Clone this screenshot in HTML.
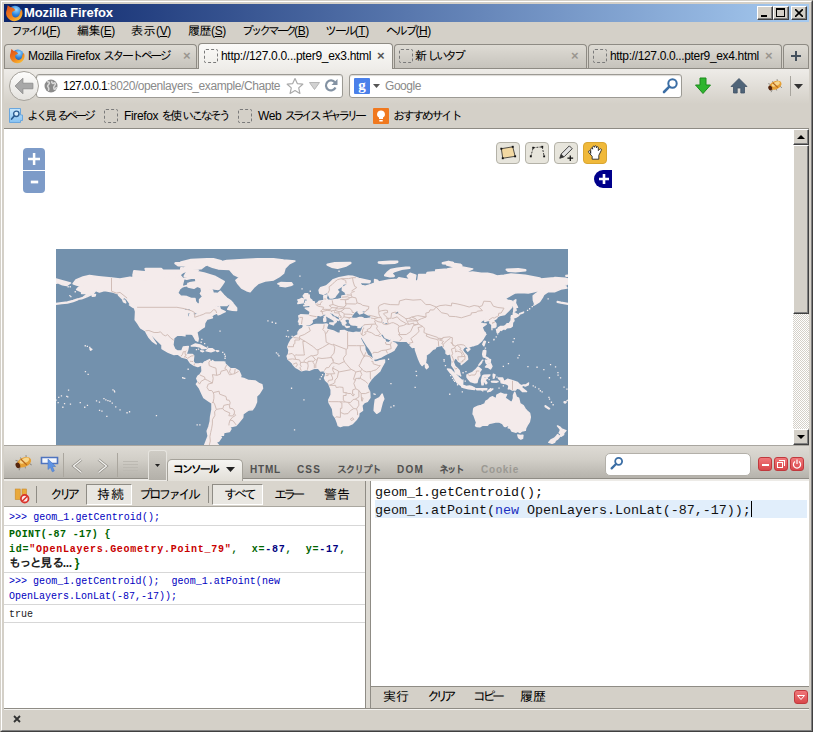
<!DOCTYPE html>
<html lang="ja"><head><meta charset="utf-8"><title>Mozilla Firefox</title>
<style>
*{box-sizing:border-box;margin:0;padding:0}
html,body{width:813px;height:732px;overflow:hidden;background:#d4d0c8}
body{position:relative;font-family:"Liberation Sans","IPAGothic",sans-serif;font-size:12px;color:#000}
.a{position:absolute}
.t{position:absolute;white-space:nowrap;line-height:14px;height:14px}
.u{text-decoration:underline}
.mono{font-family:"Liberation Mono","IPAGothic",monospace}
/* window frame */
#frame{left:0;top:0;width:813px;height:732px;border:1px solid;border-color:#d4d0c8 #404040 #404040 #d4d0c8}
#frame2{left:1px;top:1px;width:811px;height:730px;border:1px solid;border-color:#fff #808080 #808080 #fff}
#title{left:4px;top:4px;width:805px;height:18px;background:linear-gradient(90deg,#0a246a,#a6caf0)}
.wb{top:6px;width:16px;height:14px;background:#d4d0c8;border:1px solid;border-color:#fff #404040 #404040 #fff;box-shadow:inset -1px -1px 0 #808080}
/* tabs */
.tab{top:44px;height:24px;border:1px solid #8e8b84;border-bottom:none;border-radius:4px 4px 0 0;background:linear-gradient(#dedbd4,#c6c3bc)}
.tab.act{background:linear-gradient(#fbfaf8,#eeece8);top:43px;height:27px}
.dash{width:14px;height:14px;border:1px dashed #7a7a7a;border-radius:2px}
.tx{font-size:13px;font-weight:bold;color:#9a9690;font-family:"Liberation Sans",sans-serif}
/* nav */
.box{background:#fff;border:1px solid #9c9a94;border-radius:3px;box-shadow:inset 0 1px 1px #dcdad6}
/* content */
#content{left:4px;top:129px;width:789px;height:316px;background:#fff}
#vscroll{left:793px;top:129px;width:16px;height:316px;background:repeating-conic-gradient(#fff 0 25%,#d4d0c8 0 50%) 0 0/2px 2px}
.sbtn{left:0;width:16px;height:16px;background:#d4d0c8;border:1px solid;border-color:#fff #404040 #404040 #fff;box-shadow:inset -1px -1px 0 #808080}
.zb{left:23px;width:22px;height:22px;background:#7d9bc8;color:#fff}
.ed{top:142px;width:24px;height:22px;border:1px solid #b4b2a8;border-radius:4px;background:#e7e5dc}
.map{position:absolute;left:56px;top:249px}
/* firebug */
#fbtool{left:4px;top:445px;width:805px;height:36px;background:linear-gradient(#dddad4,#d2cfc8 40%,#b4b1aa);border-top:1px solid #a9a6a0;border-bottom:2px solid #edebe7;box-shadow:inset 0 -1px 0 #8f8c85}
.fbtab{position:absolute;top:464px;font-weight:bold;font-size:10px;line-height:12px;color:#505050;white-space:nowrap}
.rb{top:457px;width:14px;height:14px;border-radius:3px;background:linear-gradient(#f0787a,#d9474b);border:1px solid #c0393d}
#ctool{left:4px;top:481px;width:361px;height:26px;background:#d9d5cd;border-bottom:1px solid #aaa79f}
.row{left:4px;width:361px;border-bottom:1px solid #d7d7d7;background:#fff}
.cl{position:absolute;left:9px;white-space:nowrap;font-family:"Liberation Mono","IPAGothic",monospace;font-size:10px;line-height:14px}
.ed16{position:absolute;left:375px;white-space:nowrap;font-family:"Liberation Mono","IPAGothic",monospace;font-size:13.4px;line-height:18px;color:#111}
.k{letter-spacing:var(--k)}.c{letter-spacing:var(--c)}</style></head><body>
<div class="a" id="frame"></div><div class="a" id="frame2"></div>
<!-- title bar -->
<div class="a" id="title"></div>
<svg class="a" style="left:5px;top:4px" width="18" height="18" viewBox="0 0 16 16"><defs><radialGradient id="gl" cx="0.6" cy="0.3" r="0.8"><stop offset="0" stop-color="#9fdcff"/><stop offset="0.5" stop-color="#2f86dc"/><stop offset="1" stop-color="#143f9e"/></radialGradient><linearGradient id="fx" x1="0.2" y1="0" x2="0.8" y2="1"><stop offset="0" stop-color="#e0521a"/><stop offset="0.55" stop-color="#ee7f1c"/><stop offset="1" stop-color="#fbc338"/></linearGradient></defs><circle cx="8.8" cy="7.3" r="5.8" fill="url(#gl)"/><path d="M14.6 4.4 A7.3 7.3 0 1 1 1.6 5 L2.4 1 L4.8 2.9 C6.5 2.8 8.2 4 9.2 5.6 L6.3 7.2 C5.6 9.6 7.2 12 9.6 12 C12 12 13.6 9.6 13.2 7 C14 6.4 14.5 5.4 14.6 4.4Z" fill="url(#fx)"/></svg>
<span class="t" style="letter-spacing:-0.09px;left:24px;top:6px;color:#fff;font-weight:bold;font-size:13px">Mozilla Firefox</span>
<div class="a wb" style="left:757px"><div class="a" style="left:3px;top:8px;width:6px;height:2px;background:#000"></div></div>
<div class="a wb" style="left:773px"><div class="a" style="left:2px;top:1px;width:9px;height:9px;border:1px solid #000;border-top-width:2px"></div></div>
<div class="a wb" style="left:791px"><svg class="a" style="left:3px;top:2px" width="8" height="8"><path d="M0 0L8 8M8 0L0 8" stroke="#000" stroke-width="1.6"/></svg></div>
<!-- menu -->
<span class="t" style="letter-spacing:-0.35px;--k:-3.32px;left:11px;top:24px"><span class="k">ファイル</span>(<span class="u">F</span>)</span>
<span class="t" style="letter-spacing:-0.35px;--c:-0.48px;left:77px;top:24px"><span class="c">編集</span>(<span class="u">E</span>)</span>
<span class="t" style="letter-spacing:-0.35px;--c:0.52px;left:131px;top:24px"><span class="c">表示</span>(<span class="u">V</span>)</span>
<span class="t" style="letter-spacing:-0.35px;--c:-0.48px;left:188px;top:24px"><span class="c">履歴</span>(<span class="u">S</span>)</span>
<span class="t" style="letter-spacing:-0.35px;--k:-3.33px;left:242px;top:24px"><span class="k">ブックマーク</span>(<span class="u">B</span>)</span>
<span class="t" style="letter-spacing:-0.35px;--k:-2.10px;left:325px;top:24px"><span class="k">ツール</span>(<span class="u">T</span>)</span>
<span class="t" style="letter-spacing:-0.35px;--k:-2.21px;left:386px;top:24px"><span class="k">ヘルプ</span>(<span class="u">H</span>)</span>
<!-- tabs -->
<div class="a" style="left:4px;top:68px;width:805px;height:1px;background:#8e8b84"></div>
<div class="a tab" style="left:4px;width:193px"></div>
<div class="a tab act" style="left:198px;width:195px"></div>
<div class="a tab" style="left:394px;width:193px"></div>
<div class="a tab" style="left:588px;width:194px"></div>
<div class="a tab" style="left:783px;width:26px"></div>
<svg class="a" style="left:9px;top:48px" width="16" height="16" viewBox="0 0 16 16"><circle cx="8.8" cy="7.3" r="5.8" fill="url(#gl)"/><path d="M14.6 4.4 A7.3 7.3 0 1 1 1.6 5 L2.4 1 L4.8 2.9 C6.5 2.8 8.2 4 9.2 5.6 L6.3 7.2 C5.6 9.6 7.2 12 9.6 12 C12 12 13.6 9.6 13.2 7 C14 6.4 14.5 5.4 14.6 4.4Z" fill="url(#fx)"/></svg>
<span class="t" style="letter-spacing:-0.35px;--k:-2.55px;left:28px;top:49px">Mozilla Firefox <span class="k">スタートページ</span></span>
<span class="t tx" style="left:183px;top:49px">×</span>
<div class="a dash" style="left:204px;top:49px"></div>
<span class="t" style="letter-spacing:-0.30px;left:221px;top:49px">http://127.0.0...pter9_ex3.html</span>
<span class="t tx" style="left:377px;top:49px;color:#555">×</span>
<div class="a dash" style="left:399px;top:49px"></div>
<span class="t" style="letter-spacing:0.00px;--k:-3.03px;--c:0.00px;left:415px;top:49px"><span class="c">新</span><span class="k">しいタブ</span></span>
<span class="t tx" style="left:571px;top:49px">×</span>
<div class="a dash" style="left:593px;top:49px"></div>
<span class="t" style="letter-spacing:-0.34px;left:610px;top:49px">http://127.0.0...pter9_ex4.html</span>
<span class="t tx" style="left:765px;top:49px">×</span>
<svg class="a" style="left:790px;top:50px" width="12" height="12"><path d="M6 1V11M1 6H11" stroke="#44505c" stroke-width="2"/></svg>
<!-- nav bar -->
<div class="a" style="left:4px;top:69px;width:805px;height:35px;background:linear-gradient(#eeece8,#d4d0c8)"></div>
<div class="a box" style="left:36px;top:74px;width:307px;height:24px"></div>
<div class="a" style="left:9px;top:71px;width:30px;height:30px;border-radius:15px;background:linear-gradient(#fdfdfc,#e4e2de);border:1px solid #a6a39c"></div>
<svg class="a" style="left:14px;top:77px" width="20" height="18" viewBox="0 0 18 16"><path d="M8 1L1 8L8 15V10.5H17V5.5H8Z" fill="#a8a8a8" stroke="#8e8e8e" stroke-width="0.8" stroke-linejoin="round"/></svg>
<svg class="a" style="left:44px;top:79px" width="14" height="14" viewBox="0 0 14 14"><circle cx="7" cy="7" r="6.5" fill="#8b8b8b"/><path d="M3 3C5 2 6 4 5 5C4 6 3 7 4 8C5 9 5 11 4 11.5M8 2C7 4 9 5 10 4C11 3.5 12 5 11 6C10 7 9 8 10 10C11 11 12 9 12.5 8" fill="none" stroke="#d8d8d8" stroke-width="1.6"/></svg>
<span class="t" style="letter-spacing:-0.67px;left:63px;top:79px">127.0.0.1</span>
<span class="t" style="letter-spacing:-0.42px;left:107px;top:79px;color:#8a8a8a">:8020/openlayers_example/Chapte</span>
<svg class="a" style="left:286px;top:77px" width="18" height="18" viewBox="0 0 18 18"><path d="M9 1.5L11.3 6.6L16.8 7.2L12.7 10.9L13.9 16.4L9 13.6L4.1 16.4L5.3 10.9L1.2 7.2L6.7 6.6Z" fill="#fff" stroke="#aaa" stroke-width="1.2" stroke-linejoin="round"/></svg>
<svg class="a" style="left:309px;top:82px" width="11" height="8"><path d="M0.5 0.5H10.5L5.5 7.5Z" fill="#d2d2d2" stroke="#b6b6b6"/></svg>
<svg class="a" style="left:324px;top:78px" width="15" height="15" viewBox="0 0 15 15"><path d="M11.5 9.5A5 5 0 1 1 11 4.5" fill="none" stroke="#8392a3" stroke-width="2.2"/><path d="M13.5 1V7H7.5Z" fill="#8392a3"/></svg>
<div class="a box" style="left:349px;top:74px;width:333px;height:24px"></div>
<div class="a" style="left:354px;top:78px;width:16px;height:16px;background:#4a80ea;border-radius:1px;color:#fff;font:bold 15px/15px 'Liberation Serif',serif;text-align:center">g</div>
<svg class="a" style="left:373px;top:84px" width="7" height="4"><path d="M0 0H7L3.5 4Z" fill="#555"/></svg>
<span class="t" style="letter-spacing:-0.45px;left:385px;top:79px;color:#8a8a8a">Google</span>
<svg class="a" style="left:662px;top:77px" width="17" height="17" viewBox="0 0 17 17"><circle cx="10.5" cy="6.5" r="4.2" fill="#fff" stroke="#3b6ea5" stroke-width="2"/><path d="M7.3 9.7L2 15" stroke="#3b6ea5" stroke-width="2.6" stroke-linecap="round"/></svg>
<svg class="a" style="left:694px;top:77px" width="18" height="18" viewBox="0 0 18 18"><path d="M6 1H12V8H16.5L9 16.5L1.5 8H6Z" fill="#2fb52f" stroke="#1d8a1d" stroke-width="1" stroke-linejoin="round"/></svg>
<svg class="a" style="left:730px;top:77px" width="18" height="18" viewBox="0 0 18 18"><path d="M9 1.5L17 9.5H14.5V16H10.8V11H7.2V16H3.5V9.5H1Z" fill="#4f6478" stroke="#3f5164" stroke-width="0.8" stroke-linejoin="round"/></svg>
<svg class="a" style="left:766px;top:77px" width="18" height="17" viewBox="0 0 20 18"><g transform="rotate(-24 10 9)"><path d="M4 4L7 7M3 14L6.5 11M9 3.5L10 6M15 3.5L14 6.5M16 14.5L14.5 11.5M9.5 14.8L10 12" stroke="#8a8680" stroke-width="0.9" fill="none"/><ellipse cx="10.5" cy="9" rx="7.2" ry="4.5" fill="#e6a035"/><ellipse cx="11.5" cy="7.8" rx="4.8" ry="2.2" fill="#f7d68c"/><path d="M9 5.2L12 12.6" stroke="#b5651d" stroke-width="1.2"/><ellipse cx="4" cy="9.3" rx="2.1" ry="2.8" fill="#55260e"/></g></svg>
<div class="a" style="left:790px;top:76px;width:1px;height:20px;background:#a8a59e"></div>
<svg class="a" style="left:794px;top:84px" width="9" height="5"><path d="M0 0H9L4.5 5Z" fill="#333"/></svg>
<!-- bookmarks -->
<svg class="a" style="left:8px;top:107px" width="16" height="17" viewBox="0 0 16 17"><defs><linearGradient id="bk" x1="0" y1="0" x2="0" y2="1"><stop offset="0" stop-color="#c6e6fc"/><stop offset="1" stop-color="#86c1f1"/></linearGradient></defs><path d="M1.5 1.5H12.5V8H14.5V13.5H12.5V15.5H1.5Z" fill="url(#bk)" stroke="#6aa6dd" stroke-width="1"/><circle cx="8.3" cy="6.8" r="2.7" fill="#d9eefc" stroke="#2c5d92" stroke-width="1.4"/><path d="M6.3 8.9L3.6 12" stroke="#2c5d92" stroke-width="1.7" stroke-linecap="round"/></svg>
<span class="t" style="letter-spacing:0.00px;--k:-3.02px;--c:0.00px;left:27px;top:109px"><span class="k">よく</span><span class="c">見</span><span class="k">るページ</span></span>
<div class="a dash" style="left:104px;top:109px"></div>
<span class="t" style="letter-spacing:-0.35px;--k:-2.87px;--c:0.00px;left:124px;top:109px">Firefox <span class="k">を</span><span class="c">使</span><span class="k">いこなそう</span></span>
<div class="a dash" style="left:238px;top:109px"></div>
<span class="t" style="letter-spacing:-0.35px;--k:-3.54px;left:258px;top:109px">Web <span class="k">スライス</span> <span class="k">ギャラリー</span></span>
<svg class="a" style="left:373px;top:108px" width="16" height="16" viewBox="0 0 16 16"><rect width="16" height="16" rx="1" fill="#f0781e"/><path d="M8 2.5A3.8 3.8 0 0 1 10 9.6V11H6V9.6A3.8 3.8 0 0 1 8 2.5ZM6.3 12H9.7V13.5H6.3Z" fill="#fff"/></svg>
<span class="t" style="letter-spacing:0.00px;--k:-2.38px;left:393px;top:109px"><span class="k">おすすめサイト</span></span>
<!-- content -->
<div class="a" style="left:4px;top:128px;width:805px;height:1px;background:#8e8b84"></div>
<div class="a" id="content"></div>
<div class="a" id="vscroll">
 <div class="a sbtn" style="top:0px"><svg class="a" style="left:3px;top:5px" width="8" height="4"><path d="M0 4H8L4 0Z" fill="#000"/></svg></div>
 <div class="a sbtn" style="top:16px;height:169px"></div>
 <div class="a sbtn" style="top:300px"><svg class="a" style="left:3px;top:5px" width="8" height="4"><path d="M0 0H8L4 4Z" fill="#000"/></svg></div>
</div>
<div class="a zb" style="top:148px;border-radius:4px 4px 0 0"><svg class="a" style="left:5px;top:5px" width="12" height="12"><path d="M6.1 0V12M0 6H12.2" stroke="#fff" stroke-width="2.5"/></svg></div>
<div class="a zb" style="top:171px;border-radius:0 0 4px 4px"><svg class="a" style="left:7px;top:9px" width="9" height="4"><path d="M0.8 2H8.2" stroke="#fff" stroke-width="2.8"/></svg></div>
<div class="a ed" style="left:496px"><svg style="display:block" width="22" height="20" viewBox="0 0 23 21"><path d="M4.5 6L16.5 4L19 14L6 16Z" fill="#f3d9a2" stroke="#222" stroke-width="0.8"/><g fill="#111"><rect x="3.5" y="5" width="2" height="2"/><rect x="15.5" y="3" width="2" height="2"/><rect x="18" y="13" width="2" height="2"/><rect x="5" y="15" width="2" height="2"/></g></svg></div>
<div class="a ed" style="left:525px"><svg style="display:block" width="22" height="20" viewBox="0 0 23 21"><path d="M5 14L7.5 5L17 4L19 14" fill="none" stroke="#222" stroke-width="0.9" stroke-dasharray="2 1.2"/><g fill="#111"><rect x="4" y="13" width="2" height="2"/><rect x="6.5" y="4" width="2" height="2"/><rect x="16" y="3" width="2" height="2"/><rect x="18" y="13" width="2" height="2"/></g></svg></div>
<div class="a ed" style="left:554px"><svg style="display:block" width="22" height="20" viewBox="0 0 23 21"><path d="M5 16L6.5 11.5L15 3L18 6L9.5 14.5Z" fill="#e4e4e4" stroke="#222" stroke-width="0.9" stroke-linejoin="round"/><path d="M5 16L6.5 11.5L9.5 14.5Z" fill="#333"/><path d="M16 13V19M13 16H19" stroke="#111" stroke-width="1.3"/></svg></div>
<div class="a ed" style="left:583px;background:#f0b93a;border-color:#d9a632"><svg style="display:block" width="22" height="20" viewBox="0 0 23 21"><path d="M7 11V6.5C7 5 9 5 9 6.5V4.5C9 3 11 3 11 4.5V4C11 2.5 13 2.5 13 4V5C13 3.5 15 3.5 15 5V8L16.5 6.5C17.5 5.5 19 6.5 18 8L15.5 13V17H8.5V14L5 10C4 8.5 5.5 7.5 6.5 8.5Z" fill="#fff" stroke="#222" stroke-width="0.9" stroke-linejoin="round"/></svg></div>
<div class="a" style="left:594px;top:170px;width:18px;height:18px;background:#00008b;border-radius:9px 0 0 9px"><svg class="a" style="left:5px;top:4px" width="10" height="10"><path d="M5 0V10M0 5H10" stroke="#fff" stroke-width="2.6"/></svg></div>
<svg class="map" width="512" height="196" viewBox="0 0 512 196"><rect width="512" height="256" fill="#7391ad"/><g filter="url(#mb)"><path d="M17.1 34.7 L19.9 30.9 L27.0 28.0 L33.4 26.6 L42.7 27.7 L55.5 29.0 L64.0 29.9 L74.0 28.2 L79.6 29.2 L85.3 29.3 L92.4 31.3 L102.4 31.3 L112.4 31.3 L119.5 31.3 L120.9 26.3 L123.7 25.7 L126.6 29.2 L130.8 30.2 L135.1 29.2 L139.4 28.9 L140.1 32.7 L133.7 33.7 L131.6 36.3 L126.6 37.7 L123.7 39.8 L121.6 44.1 L124.4 46.9 L130.8 47.6 L135.1 49.4 L139.0 49.6 L139.4 52.6 L141.5 55.0 L143.6 54.8 L143.6 50.5 L146.8 47.6 L144.4 44.5 L145.8 42.0 L145.1 39.3 L151.5 39.4 L156.4 41.2 L157.2 44.1 L162.1 44.4 L164.3 42.2 L167.8 46.2 L170.7 49.1 L174.9 51.9 L176.8 54.0 L172.8 55.0 L170.7 56.6 L161.4 56.6 L157.9 59.0 L163.6 58.0 L164.3 60.4 L169.2 62.6 L165.0 64.7 L162.1 65.8 L161.4 64.0 L157.9 65.4 L155.7 66.8 L156.4 68.7 L150.8 70.3 L148.6 74.0 L148.3 77.9 L145.1 79.8 L140.8 83.2 L142.2 89.6 L141.8 92.2 L139.7 91.0 L138.2 88.2 L136.5 85.3 L132.3 84.8 L128.7 85.0 L129.0 86.8 L125.9 86.2 L121.6 86.0 L117.8 88.9 L117.3 92.4 L116.9 96.0 L118.8 100.3 L121.6 102.1 L125.9 101.7 L127.3 98.1 L132.3 97.4 L131.6 101.0 L130.1 105.2 L136.5 105.5 L137.7 106.7 L137.0 112.4 L138.7 114.8 L142.2 114.9 L145.1 114.5 L146.5 115.9 L144.8 116.3 L141.8 117.6 L138.2 116.3 L134.4 113.8 L131.6 109.5 L125.9 108.1 L121.6 105.0 L118.0 105.5 L112.4 103.4 L106.0 99.6 L106.0 96.0 L101.0 91.3 L96.0 86.0 L92.9 82.9 L96.0 88.5 L98.1 91.7 L100.3 95.0 L96.7 92.4 L93.2 88.5 L91.3 85.3 L89.5 81.8 L84.6 78.9 L81.8 74.4 L79.2 70.7 L79.6 62.6 L78.6 59.2 L81.8 59.7 L81.1 57.9 L74.7 55.5 L71.1 50.5 L66.8 46.9 L61.9 44.8 L56.9 43.0 L48.4 41.5 L43.4 43.0 L39.8 41.5 L37.0 44.8 L31.3 47.6 L25.6 49.8 L21.6 50.3 L27.0 48.4 L32.0 44.5 L25.6 44.5 L25.6 42.7 L20.6 40.5 L22.8 38.1 L27.0 36.7 L21.3 36.3Z M152.2 16.6 L159.3 14.2 L170.7 11.4 L192.0 10.2 L213.3 9.2 L227.6 11.0 L238.9 12.1 L233.2 14.9 L229.0 19.2 L227.6 24.2 L223.3 27.7 L217.6 30.9 L209.1 32.0 L202.0 34.6 L197.7 38.4 L194.1 42.7 L190.6 41.7 L185.6 39.1 L182.0 34.8 L179.9 31.3 L183.5 28.4 L177.8 25.6 L173.5 20.6 L162.1 19.9 L156.4 18.2Z M171.7 60.2 L174.9 55.0 L177.1 54.8 L180.6 59.0 L180.6 61.6 L176.4 61.3Z M73.5 55.9 L78.2 56.9 L80.5 59.2 L77.5 58.6Z M135.3 96.9 L139.4 95.0 L145.1 96.3 L150.5 99.3 L145.8 99.7 L144.4 98.1 L139.4 97.0Z M150.2 101.8 L152.5 99.7 L156.4 99.8 L158.7 101.5 L155.0 102.7Z M144.6 101.8 L147.6 102.3 L146.2 102.7Z M160.4 101.8 L162.7 102.0 L161.4 102.5Z M146.1 115.8 L148.6 112.9 L150.0 112.4 L153.6 110.6 L154.3 112.4 L154.3 114.5 L156.4 111.6 L158.6 113.1 L165.0 113.1 L167.8 112.9 L170.0 115.9 L174.2 119.5 L179.2 119.8 L182.8 121.9 L184.9 126.6 L184.2 128.7 L187.7 129.4 L192.7 131.6 L199.1 132.0 L203.4 134.8 L205.9 135.8 L206.5 139.4 L203.4 144.4 L200.5 147.2 L200.5 152.9 L198.4 157.9 L196.3 160.7 L192.7 161.0 L187.0 165.0 L186.7 168.5 L182.0 174.2 L179.9 176.6 L175.6 177.5 L172.9 176.4 L174.9 179.9 L173.5 182.5 L167.8 183.5 L167.4 186.3 L163.6 186.3 L165.4 188.4 L162.8 192.0 L160.0 193.4 L162.4 196.0 L157.9 199.8 L158.7 202.5 L163.3 205.9 L158.6 206.9 L153.6 204.8 L150.0 202.0 L148.6 196.3 L150.8 190.6 L152.2 187.0 L151.2 182.0 L152.9 177.8 L154.3 172.1 L154.6 167.8 L156.0 160.7 L156.0 154.2 L152.9 152.2 L147.9 148.6 L146.2 145.1 L143.6 139.4 L140.4 135.1 L142.2 132.7 L140.8 129.4 L142.2 126.9 L143.9 125.9 L146.1 122.3 L145.8 118.0Z M242.8 66.8 L244.6 65.8 L253.4 66.3 L254.3 62.6 L249.3 59.2 L253.9 58.7 L254.2 57.3 L256.3 57.3 L258.3 55.6 L261.7 54.0 L263.1 52.2 L268.1 51.6 L267.8 46.9 L271.1 45.9 L270.2 49.1 L271.6 51.2 L275.9 51.2 L282.3 50.2 L285.9 49.5 L285.9 46.9 L290.6 46.2 L289.4 43.8 L295.8 43.2 L298.7 42.7 L288.7 42.8 L286.3 41.2 L286.6 38.4 L291.6 35.6 L290.1 34.4 L287.3 35.1 L285.9 37.0 L280.6 40.5 L282.7 42.7 L279.5 46.9 L278.8 48.1 L276.3 49.1 L274.2 49.1 L271.9 44.2 L270.9 43.4 L267.4 45.4 L263.8 44.4 L263.1 41.2 L264.5 38.8 L270.2 37.0 L274.5 33.4 L277.3 30.6 L283.0 28.7 L292.3 26.9 L296.5 27.3 L300.1 28.4 L302.9 29.4 L314.3 32.0 L313.6 33.7 L305.8 33.4 L302.9 33.0 L305.8 36.6 L309.3 37.3 L312.9 36.1 L318.6 34.1 L318.6 30.6 L321.4 31.3 L322.8 32.9 L332.8 30.9 L341.3 30.2 L342.8 28.7 L351.3 30.2 L354.1 30.9 L351.3 27.0 L354.1 24.2 L359.8 26.3 L359.1 30.6 L360.5 33.1 L362.0 30.6 L362.7 25.6 L370.5 25.6 L371.2 23.5 L379.7 22.8 L379.7 20.9 L391.1 19.9 L403.9 17.5 L416.7 19.9 L408.2 23.9 L416.7 23.0 L425.2 24.2 L431.6 24.2 L436.6 25.2 L440.9 27.0 L448.0 26.2 L455.1 24.9 L469.3 26.3 L483.6 28.9 L485.0 29.9 L497.8 28.7 L499.2 28.4 L509.2 29.3 L512.0 29.9 L512.0 34.4 L510.6 35.8 L508.4 36.0 L511.0 39.1 L504.9 40.1 L498.5 42.7 L492.1 42.7 L487.8 45.5 L486.4 48.4 L483.6 52.6 L478.9 55.5 L477.4 51.2 L477.2 46.9 L480.7 44.1 L487.8 39.8 L483.6 41.2 L477.9 42.7 L472.2 44.1 L465.1 43.5 L458.7 44.1 L455.1 46.2 L448.7 49.8 L451.6 51.2 L455.8 51.9 L457.1 54.0 L455.7 58.3 L453.0 61.2 L448.7 65.4 L443.7 66.6 L441.7 67.6 L440.2 69.7 L437.3 71.4 L439.9 74.7 L439.9 77.5 L435.9 79.1 L435.9 75.7 L433.8 74.0 L434.2 71.7 L432.4 71.4 L428.8 72.5 L429.2 69.8 L425.2 72.2 L423.8 74.0 L427.4 74.7 L430.2 75.1 L426.0 78.2 L427.8 82.5 L429.2 83.9 L429.5 85.6 L427.4 89.2 L425.2 92.2 L421.7 95.3 L418.1 96.3 L413.2 97.7 L412.4 99.1 L410.3 97.1 L407.6 98.8 L406.3 101.0 L408.2 103.8 L411.0 106.7 L411.6 110.2 L408.2 113.1 L405.3 115.5 L405.3 113.8 L402.5 112.4 L401.1 110.2 L399.4 108.8 L398.2 110.2 L397.2 113.1 L398.9 117.3 L401.1 119.2 L403.2 121.6 L404.2 125.9 L402.9 125.9 L399.6 123.7 L398.6 120.2 L395.8 116.3 L396.1 112.4 L395.0 106.7 L394.7 104.5 L391.5 105.5 L390.1 104.5 L390.1 101.4 L387.3 98.1 L386.6 96.0 L384.0 96.7 L381.9 97.1 L379.7 98.1 L379.0 99.6 L376.9 100.3 L373.0 104.2 L370.1 106.0 L370.1 109.5 L369.5 113.4 L368.4 114.8 L367.2 115.3 L366.2 116.5 L364.5 114.2 L362.7 110.2 L361.2 106.0 L359.5 101.0 L359.3 97.4 L358.7 98.1 L356.3 98.4 L354.1 96.3 L356.0 95.3 L352.7 94.3 L351.3 92.7 L350.6 91.9 L344.2 92.2 L337.8 91.6 L336.4 89.6 L333.5 90.2 L329.2 88.5 L327.1 85.0 L325.4 85.0 L324.3 86.0 L327.1 90.0 L329.0 90.9 L329.4 93.0 L332.8 93.7 L335.9 90.7 L336.5 93.2 L339.5 94.4 L341.0 96.0 L339.2 99.0 L338.1 101.0 L334.5 103.1 L330.2 105.2 L325.7 107.7 L320.0 109.8 L317.9 109.9 L316.9 106.7 L316.4 104.5 L313.9 100.3 L311.6 97.4 L308.9 93.2 L305.8 88.2 L305.6 86.0 L304.6 88.5 L302.4 85.3 L301.9 83.6 L304.8 83.5 L305.8 81.4 L307.2 77.5 L307.2 75.7 L304.4 76.4 L302.2 76.7 L299.4 76.1 L297.2 75.9 L295.0 75.4 L293.4 73.2 L294.0 71.8 L293.3 70.8 L293.0 70.1 L290.1 69.8 L289.4 70.8 L288.4 70.5 L288.4 72.1 L290.1 74.0 L288.7 74.7 L289.0 76.1 L287.9 76.1 L286.9 75.7 L286.2 74.2 L285.9 72.5 L284.2 71.4 L283.6 69.3 L283.7 68.3 L282.3 67.6 L278.8 66.1 L277.3 64.7 L276.2 63.7 L275.3 64.0 L275.5 63.0 L273.5 63.6 L273.6 65.1 L275.3 66.1 L276.2 67.7 L278.9 68.4 L278.8 69.1 L282.3 70.8 L282.2 71.4 L280.2 70.4 L279.6 71.5 L280.3 72.5 L279.5 73.5 L278.3 74.1 L278.5 72.7 L277.8 71.1 L276.5 70.3 L273.5 68.7 L270.9 67.0 L270.2 65.4 L268.5 64.9 L266.7 65.7 L264.5 66.7 L261.7 66.1 L260.3 67.6 L260.6 68.6 L257.1 70.1 L255.6 71.8 L256.3 73.0 L255.0 74.5 L253.2 75.7 L249.7 75.8 L248.0 76.8 L247.0 75.9 L245.5 75.1 L243.3 75.4 L243.5 73.2 L242.5 72.8 L243.5 69.7Z M0.0 30.0 L7.1 32.0 L14.5 34.0 L10.7 36.6 L6.4 35.8 L2.1 33.8 L0.0 34.4Z M247.6 77.1 L253.2 77.9 L257.4 76.1 L260.3 75.5 L267.4 75.4 L270.2 75.0 L271.6 75.4 L270.9 77.5 L270.2 79.4 L271.6 80.6 L277.3 81.9 L281.6 84.2 L284.4 83.9 L284.4 81.8 L288.7 81.6 L291.6 82.9 L297.2 83.9 L300.1 83.2 L301.9 83.6 L302.4 85.3 L303.6 88.2 L306.5 93.9 L308.6 97.4 L309.0 101.0 L311.5 106.0 L314.3 108.1 L317.6 110.5 L317.2 111.6 L319.3 113.2 L322.8 112.1 L328.5 110.9 L328.5 113.2 L325.7 118.0 L323.6 122.3 L318.6 126.6 L315.0 130.6 L312.2 134.7 L311.2 137.2 L312.2 140.1 L313.6 142.9 L313.9 148.6 L311.5 152.2 L308.3 153.6 L305.8 156.4 L306.5 161.4 L302.9 164.0 L302.6 167.1 L300.1 170.7 L296.5 174.6 L292.6 176.4 L287.3 176.6 L284.4 177.5 L282.2 176.6 L281.6 174.2 L279.5 168.7 L277.3 165.7 L276.6 160.0 L273.1 153.6 L272.8 150.8 L275.2 145.8 L275.2 140.8 L273.5 136.5 L272.8 134.4 L269.5 131.3 L268.5 129.0 L269.5 126.6 L269.9 123.0 L268.5 121.6 L266.0 121.7 L264.5 121.9 L262.4 119.2 L259.6 119.0 L257.4 119.6 L253.2 121.3 L250.3 120.6 L245.3 121.7 L242.5 119.9 L239.6 118.3 L237.1 115.5 L236.5 114.1 L234.7 112.4 L232.2 110.4 L231.1 107.1 L232.5 105.2 L233.0 101.0 L231.8 98.1 L233.2 94.3 L235.0 91.0 L237.5 88.5 L239.9 87.0 L242.1 85.8 L242.1 83.2 L243.9 80.6 L246.3 79.5Z M326.1 145.1 L327.8 150.0 L326.4 152.9 L324.0 162.1 L320.7 164.3 L318.2 161.4 L318.6 156.4 L319.3 151.0 L323.6 148.6Z M247.9 56.7 L251.0 56.5 L258.0 55.2 L258.4 53.0 L256.4 52.6 L255.7 51.2 L253.9 49.8 L253.2 48.4 L253.2 46.1 L251.0 45.9 L251.7 44.7 L248.9 44.7 L247.2 46.9 L248.2 48.4 L249.2 49.8 L251.4 50.1 L251.7 52.1 L249.6 52.3 L250.0 53.6 L248.6 54.3 L251.3 54.9 L249.9 55.3Z M241.8 54.5 L247.0 53.8 L247.5 51.9 L247.8 50.1 L245.6 49.4 L243.9 50.6 L241.8 50.9 L242.8 52.3Z M221.9 34.8 L224.7 33.6 L230.4 33.8 L235.4 33.8 L236.7 35.6 L234.7 36.6 L229.3 37.8 L224.0 37.1 L224.7 35.8Z M509.9 26.5 L512.0 26.3 L512.0 27.2 L510.0 27.2Z M457.7 62.6 L460.1 61.4 L459.4 57.9 L461.5 58.3 L459.4 54.0 L459.8 50.8 L458.0 51.9 L457.5 55.5 L458.0 59.7Z M455.1 69.0 L457.2 69.1 L459.7 68.3 L462.9 66.4 L461.2 65.4 L457.5 63.4 L457.2 66.4 L455.5 66.8Z M442.2 79.6 L444.4 79.2 L448.0 78.8 L449.0 80.4 L450.8 78.8 L453.3 78.6 L454.8 78.2 L456.2 77.2 L456.5 73.5 L458.0 71.8 L457.1 69.1 L455.4 69.7 L455.0 71.8 L453.0 74.8 L451.1 74.8 L449.4 76.8 L448.0 77.2 L444.7 77.5 L442.3 78.9Z M440.5 80.6 L442.3 79.8 L443.7 81.1 L442.7 83.3 L441.2 83.6 L440.9 81.8Z M444.3 80.6 L446.9 79.2 L447.6 79.9 L445.2 81.4Z M428.1 92.2 L429.4 92.4 L427.9 96.7 L426.8 95.3Z M410.6 100.6 L413.2 99.6 L413.9 100.1 L411.7 102.1Z M369.5 114.3 L371.5 115.9 L372.3 118.0 L370.5 119.6 L369.5 118.0Z M427.4 101.7 L429.8 101.8 L429.5 105.2 L428.8 107.4 L432.4 109.5 L432.1 110.1 L429.1 108.4 L427.4 107.7 L426.7 105.2Z M429.5 118.0 L431.6 115.8 L434.5 114.2 L435.9 117.3 L434.5 119.9 L432.4 118.3Z M429.5 111.2 L431.2 111.6 L433.1 110.2 L434.5 110.6 L434.1 113.5 L432.4 113.1 L431.4 114.8 L430.2 114.1Z M422.8 116.2 L426.0 111.9 L425.5 113.5 L423.5 115.9Z M411.0 125.9 L414.3 124.4 L416.7 123.4 L419.6 120.9 L422.1 118.0 L425.2 120.6 L423.4 123.0 L423.8 126.6 L423.1 127.3 L421.7 130.1 L421.0 133.4 L418.8 133.7 L414.6 132.6 L412.4 130.1 L411.0 128.0Z M391.5 120.0 L394.7 120.6 L398.9 124.9 L403.2 129.0 L406.8 132.3 L406.5 136.2 L404.6 136.2 L401.1 133.7 L398.6 129.4 L396.4 125.6 L394.0 123.4Z M405.6 137.7 L407.5 136.5 L410.3 137.5 L413.6 137.1 L416.3 137.8 L418.8 139.1 L418.6 140.4 L412.4 139.7 L407.5 138.5Z M420.3 139.7 L425.2 139.8 L430.9 139.8 L430.6 140.7 L425.2 140.5 L421.0 140.7Z M431.6 142.6 L433.8 140.4 L436.9 139.9 L434.5 141.9Z M426.0 135.8 L427.2 135.8 L427.1 132.3 L428.1 131.8 L429.9 134.8 L430.9 134.0 L428.8 130.6 L431.4 129.4 L430.9 128.9 L428.1 129.4 L426.7 127.6 L428.1 127.3 L432.4 127.4 L433.8 125.9 L428.1 126.3 L426.7 126.9 L426.4 128.0 L425.5 132.0Z M437.3 125.2 L439.0 125.9 L438.0 129.1 L437.2 127.3Z M438.0 132.3 L442.0 132.6 L440.2 133.3 L435.9 133.0 L435.5 132.4Z M442.3 129.1 L446.6 129.1 L448.0 132.7 L451.6 130.3 L456.5 131.7 L461.5 133.4 L463.6 135.8 L466.2 137.0 L465.1 138.0 L466.5 139.4 L470.5 142.6 L466.5 142.5 L463.6 139.7 L460.8 139.0 L459.4 141.1 L456.5 141.1 L453.7 139.5 L452.3 139.9 L453.0 137.7 L452.0 135.5 L448.7 134.4 L445.2 133.7 L444.9 132.0 L446.6 131.3 L443.7 130.8Z M466.9 136.0 L470.0 135.8 L472.5 134.0 L472.2 135.8 L469.3 137.0Z M417.7 160.0 L418.4 159.0 L422.1 157.3 L425.2 156.4 L428.8 155.0 L429.9 152.2 L431.9 151.2 L434.5 148.6 L436.6 147.8 L438.8 149.2 L440.5 149.2 L440.9 146.1 L442.3 145.4 L444.7 144.2 L448.0 145.4 L450.6 145.4 L449.0 149.0 L451.6 150.8 L454.4 152.9 L456.2 152.9 L457.5 149.3 L457.5 146.2 L458.7 143.2 L460.4 148.3 L462.6 149.3 L463.9 154.7 L467.2 156.7 L469.0 159.7 L470.8 161.7 L473.6 164.3 L474.3 168.1 L473.3 172.8 L471.2 176.1 L469.6 179.2 L469.3 181.3 L465.8 182.0 L464.1 183.5 L461.8 182.3 L460.1 183.2 L455.8 182.0 L454.4 179.2 L452.3 178.8 L453.0 177.5 L451.8 174.9 L451.6 176.6 L449.4 177.5 L448.4 177.2 L446.6 174.6 L443.0 172.8 L439.5 172.9 L435.2 173.9 L432.4 174.9 L431.6 176.2 L426.7 176.2 L423.8 177.8 L421.0 177.5 L419.6 176.8 L420.6 173.5 L419.6 170.7 L418.1 166.4 L417.1 165.0 L417.4 162.8Z M461.8 185.9 L464.4 186.5 L466.9 186.2 L466.5 189.4 L464.8 190.0 L462.6 188.6Z M501.6 176.9 L503.9 178.1 L505.6 179.9 L509.9 181.6 L507.7 183.9 L507.6 185.6 L505.3 187.2 L504.6 186.2 L504.9 184.9 L503.2 183.9 L504.3 182.0 L504.2 179.9Z M501.6 185.6 L503.9 187.3 L501.8 189.9 L499.5 191.3 L498.5 193.4 L496.1 194.3 L492.8 193.4 L494.9 191.0 L498.5 189.2 L500.6 187.0Z M273.8 74.0 L278.2 73.7 L277.5 75.8 L273.8 74.5Z M267.7 69.7 L269.8 69.7 L269.7 72.2 L267.9 72.5Z M268.2 67.6 L269.5 66.8 L269.4 69.0 L268.4 68.7Z M289.4 77.4 L293.4 77.8 L290.8 78.4Z M301.9 78.1 L305.2 77.4 L304.1 78.5 L302.2 78.6Z M489.2 156.7 L493.5 159.7 L492.8 159.9 L489.2 157.6Z M34.1 99.3 L35.8 100.3 L34.6 101.1 L34.1 100.1Z M508.2 152.7 L510.2 153.0 L509.2 154.0 L508.2 153.6Z M463.6 64.7 L467.6 63.1 L467.2 63.7 L463.6 65.1Z M169.2 201.2 L173.5 201.0 L173.5 202.2 L169.2 202.2Z M21.6 49.9 L17.1 51.5 L11.4 53.0 L5.7 53.8 L0.0 54.5 L0.0 55.2 L5.7 54.6 L11.4 53.9 L17.1 52.5 L21.6 50.9Z M501.3 52.6 L504.9 53.3 L512.0 54.5 L512.0 55.2 L504.9 54.0 L501.3 53.2Z M36.3 45.8 L39.5 45.5 L39.1 46.9 L36.3 47.2Z M66.8 50.9 L68.7 51.2 L69.7 53.8 L67.6 52.9Z M65.4 45.5 L68.3 48.4 L66.1 49.8 L62.6 46.2Z M125.9 37.5 L133.7 36.6 L142.2 37.5 L145.8 39.0 L153.6 39.0 L162.1 40.4 L162.8 39.5 L156.4 37.7 L152.2 35.6 L152.2 31.3 L139.4 28.4 L128.0 29.2Z M76.8 28.7 L77.5 25.6 L88.2 26.7 L110.9 25.3 L119.5 24.2 L122.3 27.0 L120.9 31.6 L92.4 31.6Z M89.6 24.2 L89.6 21.3 L125.2 21.3 L128.0 23.3 L119.5 24.2 L106.7 24.2Z" fill="#f4ebeb" stroke="#f4ebeb" stroke-width="1.5" stroke-linejoin="round"/><path d="M130.8 23.5 L140.8 23.0 L147.9 24.5 L159.3 28.0 L167.8 32.7 L165.7 35.8 L162.8 39.8 L156.4 38.8 L150.8 36.4 L145.1 36.3 L152.2 32.0 L145.1 28.4 L133.7 28.4 L128.7 27.0Z M89.6 24.2 L106.7 24.2 L111.6 28.7 L105.2 30.3 L95.3 30.3 L88.2 27.7Z M78.2 22.3 L91.0 23.5 L86.8 26.6 L77.5 25.9Z M128.0 19.5 L145.1 19.2 L149.3 16.1 L165.0 12.1 L156.4 10.0 L135.1 11.0 L125.2 13.5 L133.7 16.4Z M125.2 19.1 L142.2 20.6 L140.8 22.0 L125.2 21.8Z M89.6 19.9 L105.2 19.9 L106.7 22.0 L93.9 22.3Z M119.5 14.2 L132.3 13.8 L130.8 16.6 L122.3 16.4Z M110.9 23.5 L119.5 23.0 L126.6 23.0 L123.7 25.6 L118.0 26.3 L110.9 25.6Z M132.3 34.8 L140.8 37.0 L138.0 38.8 L132.3 37.5Z M271.6 15.6 L278.8 14.2 L294.4 13.9 L290.1 16.6 L281.6 18.9 L275.9 17.8Z M329.2 26.3 L334.2 27.4 L337.8 27.0 L334.9 24.2 L338.5 22.0 L345.6 19.9 L353.4 18.8 L349.9 18.6 L341.3 19.6 L334.9 21.0 L331.4 23.8Z M391.1 15.6 L398.2 14.9 L403.9 15.6 L405.3 16.6 L396.8 17.1Z M386.8 14.2 L392.5 12.8 L396.8 13.8 L391.1 14.6Z M322.8 13.5 L334.2 12.8 L341.3 12.8 L338.5 13.9 L327.1 14.2Z M450.8 20.6 L462.2 20.2 L469.3 21.3 L459.4 22.3 L452.3 21.8Z" fill="#f4ebeb" stroke="#f4ebeb" stroke-width="2.4" stroke-linejoin="round"/><path d="M295.8 69.0 L297.2 69.4 L300.5 69.4 L303.4 68.3 L305.8 68.3 L307.9 69.3 L310.8 69.7 L315.0 69.0 L315.0 67.3 L312.2 65.8 L309.3 64.4 L308.1 63.6 L311.5 60.9 L309.3 61.2 L305.8 62.3 L306.5 64.0 L303.6 64.9 L302.2 63.3 L303.6 62.4 L300.1 61.7 L298.2 63.6 L296.8 65.4 L295.7 66.8 L295.4 67.8Z M325.7 73.5 L327.5 75.0 L330.0 75.7 L332.5 75.1 L331.7 73.2 L328.5 73.7 L327.1 71.8Z M126.6 61.3 L135.1 61.6 L133.7 59.4 L129.4 59.7Z M131.3 68.0 L133.0 68.0 L134.4 63.1 L132.0 63.6Z M137.2 66.1 L139.4 66.1 L141.5 64.0 L137.2 62.9Z M301.9 128.0 L304.1 128.0 L304.1 130.8 L301.9 130.8Z M338.9 65.8 L342.8 65.0 L342.8 61.9 L339.2 62.6Z" fill="#7391ad" stroke="#f4ebeb" stroke-width="1.3"/><path d="M215.6 72.6h1.3v1.3h-1.3z M219.1 73.6h1.3v1.3h-1.3z M211.3 71.2h1.3v1.3h-1.3z M231.9 87.2h1.3v1.3h-1.3z M235.5 86.7h1.3v1.3h-1.3z M229.8 86.7h1.3v1.3h-1.3z M221.3 104.4h1.3v1.3h-1.3z M222.3 106.1h1.3v1.3h-1.3z M219.8 103.2h1.3v1.3h-1.3z M231.2 80.9h1.3v1.3h-1.3z M163.4 81.5h1.3v1.3h-1.3z M144.5 92.6h1.3v1.3h-1.3z M145.2 89.7h1.3v1.3h-1.3z M148.0 94.0h1.3v1.3h-1.3z M150.9 97.5h1.3v1.3h-1.3z M167.9 104.6h1.3v1.3h-1.3z M168.6 106.6h1.3v1.3h-1.3z M168.4 108.6h1.3v1.3h-1.3z M168.2 112.5h1.3v1.3h-1.3z M166.1 102.8h1.3v1.3h-1.3z M245.4 39.2h1.3v1.3h-1.3z M253.6 41.6h1.3v1.3h-1.3z M243.3 26.4h1.3v1.3h-1.3z M282.4 21.6h1.3v1.3h-1.3z M334.3 133.9h1.3v1.3h-1.3z M337.2 156.1h1.3v1.3h-1.3z M334.3 157.4h1.3v1.3h-1.3z M317.3 144.2h1.3v1.3h-1.3z M318.4 144.8h1.3v1.3h-1.3z M331.9 109.6h1.3v1.3h-1.3z M387.4 109.9h1.3v1.3h-1.3z M387.5 111.5h1.3v1.3h-1.3z M388.8 116.0h1.3v1.3h-1.3z M359.5 121.7h1.3v1.3h-1.3z M359.9 126.0h1.3v1.3h-1.3z M358.5 137.8h1.3v1.3h-1.3z M393.1 144.6h1.3v1.3h-1.3z M405.7 142.3h1.3v1.3h-1.3z M355.0 197.5h1.3v1.3h-1.3z M353.8 197.1h1.3v1.3h-1.3z M33.1 97.8h1.3v1.3h-1.3z M30.7 96.8h1.3v1.3h-1.3z M28.6 96.1h1.3v1.3h-1.3z M126.0 128.1h1.3v1.3h-1.3z M127.0 128.4h1.3v1.3h-1.3z M128.1 128.7h1.3v1.3h-1.3z M492.9 149.4h1.3v1.3h-1.3z M494.8 152.6h1.3v1.3h-1.3z M496.5 155.1h1.3v1.3h-1.3z M492.3 147.7h1.3v1.3h-1.3z M478.7 137.4h1.3v1.3h-1.3z M482.2 139.2h1.3v1.3h-1.3z M483.7 141.1h1.3v1.3h-1.3z M485.5 142.3h1.3v1.3h-1.3z M476.6 136.2h1.3v1.3h-1.3z M10.1 146.7h1.3v1.3h-1.3z M11.1 147.2h1.3v1.3h-1.3z M42.8 152.4h1.3v1.3h-1.3z M39.9 151.2h1.3v1.3h-1.3z M6.2 157.6h1.3v1.3h-1.3z M7.9 154.0h1.3v1.3h-1.3z M510.4 151.0h1.3v1.3h-1.3z M511.4 150.4h1.3v1.3h-1.3z M-0.6 150.4h1.3v1.3h-1.3z M1.5 153.0h1.3v1.3h-1.3z M461.3 108.3h1.3v1.3h-1.3z M462.6 105.8h1.3v1.3h-1.3z M446.7 116.7h1.3v1.3h-1.3z M451.8 113.9h1.3v1.3h-1.3z M471.3 116.9h1.3v1.3h-1.3z M480.4 117.6h1.3v1.3h-1.3z M487.2 119.9h1.3v1.3h-1.3z M498.9 117.3h1.3v1.3h-1.3z M493.9 115.0h1.3v1.3h-1.3z M501.4 125.4h1.3v1.3h-1.3z M501.3 123.0h1.3v1.3h-1.3z M503.9 128.3h1.3v1.3h-1.3z M492.8 128.1h1.3v1.3h-1.3z M510.3 139.5h1.3v1.3h-1.3z M507.4 137.4h1.3v1.3h-1.3z M31.5 124.7h1.3v1.3h-1.3z M28.8 121.9h1.3v1.3h-1.3z M11.9 140.5h1.3v1.3h-1.3z M56.3 140.2h1.3v1.3h-1.3z M57.7 141.3h1.3v1.3h-1.3z M58.0 142.3h1.3v1.3h-1.3z M49.2 150.2h1.3v1.3h-1.3z M53.4 151.6h1.3v1.3h-1.3z M55.6 153.4h1.3v1.3h-1.3z M51.3 151.0h1.3v1.3h-1.3z M47.3 149.0h1.3v1.3h-1.3z M59.1 157.3h1.3v1.3h-1.3z M63.4 160.3h1.3v1.3h-1.3z M70.4 163.1h1.3v1.3h-1.3z M72.9 162.1h1.3v1.3h-1.3z M99.8 165.9h1.3v1.3h-1.3z M28.1 157.6h1.3v1.3h-1.3z M30.8 155.8h1.3v1.3h-1.3z M23.6 153.0h1.3v1.3h-1.3z M13.8 154.4h1.3v1.3h-1.3z M4.8 146.3h1.3v1.3h-1.3z M2.1 147.7h1.3v1.3h-1.3z M42.9 160.7h1.3v1.3h-1.3z M45.3 161.4h1.3v1.3h-1.3z M50.2 166.7h1.3v1.3h-1.3z M437.4 89.7h1.3v1.3h-1.3z M437.2 90.1h1.3v1.3h-1.3z M439.6 87.2h1.3v1.3h-1.3z M441.0 84.2h1.3v1.3h-1.3z M432.0 92.7h1.3v1.3h-1.3z M457.6 88.9h1.3v1.3h-1.3z M456.4 92.1h1.3v1.3h-1.3z M473.0 59.1h1.3v1.3h-1.3z M475.6 57.0h1.3v1.3h-1.3z M470.9 60.8h1.3v1.3h-1.3z M477.3 55.6h1.3v1.3h-1.3z M491.5 49.2h1.3v1.3h-1.3z M13.2 46.0h1.3v1.3h-1.3z M14.2 46.9h1.3v1.3h-1.3z M13.6 37.1h1.3v1.3h-1.3z M11.5 37.1h1.3v1.3h-1.3z M18.6 42.1h1.3v1.3h-1.3z M27.8 202.8h1.3v1.3h-1.3z M217.7 210.6h1.3v1.3h-1.3z M203.1 204.6h1.3v1.3h-1.3z M202.1 204.2h1.3v1.3h-1.3z M237.9 180.2h1.3v1.3h-1.3z M247.3 150.2h1.3v1.3h-1.3z M234.9 138.6h1.3v1.3h-1.3z M264.8 127.0h1.3v1.3h-1.3z M265.9 125.1h1.3v1.3h-1.3z M267.8 122.4h1.3v1.3h-1.3z M263.4 129.4h1.3v1.3h-1.3z M140.5 175.3h1.3v1.3h-1.3z M143.2 175.2h1.3v1.3h-1.3z M139.8 100.0h1.3v1.3h-1.3z M141.9 99.4h1.3v1.3h-1.3z M131.5 119.6h1.3v1.3h-1.3z M435.3 79.9h1.3v1.3h-1.3z M438.3 77.9h1.3v1.3h-1.3z M429.2 84.7h1.3v1.3h-1.3z M417.0 96.0h1.3v1.3h-1.3z M428.2 100.5h1.3v1.3h-1.3z M428.8 98.4h1.3v1.3h-1.3z M426.1 110.6h1.3v1.3h-1.3z M423.9 113.5h1.3v1.3h-1.3z M433.9 139.1h1.3v1.3h-1.3z M442.4 138.4h1.3v1.3h-1.3z M446.7 136.2h1.3v1.3h-1.3z M440.3 127.5h1.3v1.3h-1.3z M436.6 128.5h1.3v1.3h-1.3z M432.5 130.0h1.3v1.3h-1.3z M409.3 122.0h1.3v1.3h-1.3z M406.4 123.1h1.3v1.3h-1.3z M404.0 126.1h1.3v1.3h-1.3z M408.6 131.5h1.3v1.3h-1.3z M406.3 130.5h1.3v1.3h-1.3z M394.1 126.0h1.3v1.3h-1.3z M395.9 128.7h1.3v1.3h-1.3z M397.1 130.4h1.3v1.3h-1.3z M398.0 131.7h1.3v1.3h-1.3z M400.9 135.1h1.3v1.3h-1.3z M426.1 141.2h1.3v1.3h-1.3z M425.4 140.8h1.3v1.3h-1.3z M431.2 141.9h1.3v1.3h-1.3z" fill="#f4ebeb"/><path d="M81.1 58.3 L120.9 58.3 L128.7 59.7 L135.8 61.9 L138.7 63.6 L138.7 68.3 L143.6 66.6 L147.2 65.4 L149.8 64.0 L154.3 64.0 L157.6 60.6 L159.6 61.2 L160.7 64.0 M55.5 29.0 L55.5 42.2 L60.4 44.1 L64.0 43.4 L71.1 49.1 M89.5 81.8 L92.9 81.5 L98.1 83.5 L102.1 83.5 L104.5 82.8 L107.4 86.0 L109.5 86.8 L111.6 85.6 L114.5 88.9 L117.8 91.2 M124.9 107.4 L126.6 105.2 L127.3 102.7 L129.1 102.7 L130.4 101.7 M129.1 102.7 L129.1 105.4 L130.6 105.7 M127.9 108.4 L129.0 107.5 L131.1 108.9 M129.0 107.5 L130.1 106.0 M131.3 109.5 L133.7 108.1 L135.1 107.1 L137.7 106.7 M134.1 112.2 L135.5 112.4 L137.0 112.5 M138.1 116.5 L138.5 114.5 M182.6 122.3 L178.5 124.7 L176.4 125.2 L173.5 125.9 L170.7 120.6 L165.0 122.3 L164.3 125.2 L161.0 126.3 L156.4 125.6 L157.2 129.4 L156.4 134.0 L152.2 135.1 L151.0 138.4 L152.9 141.5 L155.7 141.5 L157.2 143.6 L163.1 142.2 L163.6 145.1 L170.0 147.5 L170.7 151.0 L173.1 151.2 L174.2 153.6 L173.5 156.4 L173.8 159.3 L176.8 159.7 L178.5 162.1 L178.3 164.4 L179.6 166.4 L176.6 168.2 L174.1 171.0 L177.1 171.8 L180.1 175.9 M154.6 111.2 L152.9 113.1 L153.2 116.6 L156.4 118.0 L160.0 119.2 L160.3 123.0 L160.7 126.3 M170.7 115.9 L168.8 119.5 L170.7 120.6 M174.6 119.5 L173.5 123.0 L175.6 125.2 M179.2 119.8 L178.5 124.7 M143.9 126.0 L148.6 128.0 L149.0 130.1 L151.5 131.3 L156.4 134.0 M141.8 132.8 L143.6 135.1 L145.1 132.3 L149.0 130.1 M157.2 143.6 L157.9 145.8 L157.9 149.3 L157.2 152.9 L156.0 154.0 M157.2 152.9 L158.6 155.0 L160.4 160.4 M160.4 160.4 L158.6 162.8 L158.9 166.4 L156.4 170.7 L156.4 174.9 L155.7 179.2 L154.7 183.5 L153.9 187.7 L154.3 192.0 L152.9 197.7 L153.6 200.5 L158.6 202.4 M160.4 160.4 L164.3 159.7 L166.8 159.6 L168.1 161.4 L173.9 164.0 L172.8 166.7 L176.6 167.0 L178.3 164.4 M166.8 159.6 L167.8 156.4 L172.1 155.4 L173.5 156.4 M174.1 171.0 L173.1 174.2 L172.9 176.4 M291.6 83.1 L291.6 96.7 L291.6 99.6 L290.1 100.3 L290.1 105.7 L288.0 108.1 L287.3 109.9 L288.7 113.1 L290.8 115.6 L294.8 120.2 L298.0 121.7 L299.8 123.0 M291.6 96.7 L300.5 96.7 L308.5 96.7 M272.4 80.9 L270.2 84.6 L269.5 85.0 L270.2 93.2 L273.1 94.6 L276.2 95.9 L277.3 95.3 L290.1 100.3 M277.3 95.3 L278.8 98.8 L278.0 104.1 L275.2 107.4 L275.9 109.5 L276.6 109.9 L277.2 112.4 L278.0 113.8 L275.9 114.1 L274.5 115.9 L272.8 118.5 L270.2 118.8 L268.5 121.5 M252.9 78.1 L254.3 81.8 L250.9 83.9 L248.2 85.6 L243.6 87.2 L243.6 89.2 L237.5 88.6 M243.6 89.2 L249.2 92.4 L257.7 98.0 L260.7 101.0 L262.0 100.8 L262.0 104.5 L261.0 106.0 L257.4 106.7 L256.3 106.8 L255.0 106.7 L253.2 107.8 L251.7 108.7 L249.9 109.8 L248.2 111.6 L248.2 113.2 M273.1 94.6 L266.7 98.4 L262.0 100.8 M268.2 75.5 L267.7 78.9 L266.7 80.4 L268.8 82.5 L269.5 85.0 M243.6 89.2 L243.6 91.0 L238.9 91.0 L238.9 94.7 L237.5 95.3 L237.5 97.7 L231.8 97.7 M249.2 92.4 L246.8 92.4 L248.2 104.5 L248.5 106.0 L241.8 106.1 L239.6 105.8 L238.6 107.0 M232.5 105.2 L236.1 104.4 L238.6 107.0 L239.8 110.4 L236.5 109.9 L232.2 110.4 M239.8 110.4 L243.5 110.9 L244.6 113.5 L244.2 115.9 L245.3 117.3 L243.9 118.8 L245.3 121.7 M244.6 113.5 L248.2 113.2 L251.7 114.1 L252.2 116.9 L251.4 120.7 M237.1 115.2 L240.4 113.8 L241.4 115.9 L239.6 118.2 M251.7 114.1 L252.0 112.4 L255.7 112.2 L257.4 112.4 L257.1 113.4 L258.3 115.2 L258.3 119.2 M257.4 112.4 L259.3 110.5 L261.1 111.4 L259.8 115.2 L259.8 119.0 M261.1 111.4 L261.7 108.8 L266.0 109.5 L270.2 109.1 L275.2 108.5 L275.9 109.5 M256.3 106.8 L259.3 110.5 M278.0 113.8 L283.0 115.2 L288.4 112.5 M276.6 109.9 L277.3 112.4 M278.0 117.3 L276.6 119.0 L276.9 121.6 L278.8 124.7 L274.9 124.9 L272.1 124.9 L269.9 124.7 M272.1 124.9 L272.1 126.6 L269.7 126.6 M276.6 119.0 L282.3 121.9 L282.5 123.0 L288.0 122.0 L294.8 120.7 M282.5 123.0 L281.3 128.7 L279.0 131.1 L278.8 133.7 L276.5 135.0 L273.4 136.2 M274.9 124.9 L276.6 128.9 L276.5 130.8 L272.5 131.4 L271.9 133.5 M304.2 96.7 L304.5 101.0 L307.9 107.7 L305.8 110.9 L304.4 114.5 L302.9 116.9 L306.2 120.3 L304.4 122.0 L299.8 123.0 M307.9 107.7 L310.0 103.1 M307.9 107.7 L309.9 106.8 L313.2 107.4 L316.3 110.2 M306.2 120.3 L307.2 121.6 L310.3 122.9 L314.3 122.5 L315.6 122.3 L317.2 121.6 L320.0 120.9 L324.3 116.6 L322.8 116.6 L317.2 114.8 L316.9 112.4 L315.4 112.4 M314.3 122.5 L314.3 129.1 L315.0 130.4 M304.4 122.0 L305.8 125.6 L304.4 127.7 L304.4 129.4 L309.6 132.4 L311.8 134.7 M304.4 129.4 L299.8 129.4 L299.4 131.4 L297.5 130.3 L298.2 128.0 L299.8 123.0 M299.4 131.4 L297.8 134.4 L299.8 139.8 L302.8 141.4 L305.1 144.5 L309.3 144.6 L313.5 142.9 M273.4 136.2 L275.1 136.4 L279.6 136.4 L280.2 138.5 L283.7 138.0 L287.0 138.4 L287.3 143.6 L290.1 143.6 L290.1 146.5 L287.3 146.5 L287.3 151.0 L289.3 153.0 L291.8 153.3 M290.1 143.6 L292.1 144.5 L294.7 144.5 L297.2 147.1 L298.4 145.4 L296.4 144.9 L296.8 140.8 L299.8 139.8 M272.8 152.6 L275.9 152.7 L282.2 152.7 L289.3 153.0 M284.4 153.5 L285.9 154.0 L285.9 159.3 L284.4 159.3 L284.4 168.4 L280.2 167.8 L279.5 168.7 M284.4 163.3 L288.1 165.0 L292.0 164.6 L294.4 161.6 L297.8 159.6 L300.5 159.9 L301.5 162.8 L301.5 166.1 M291.8 153.3 L294.4 153.6 L297.1 150.5 L299.2 150.2 L302.9 147.9 L302.8 141.4 M299.2 150.2 L302.6 151.8 L302.9 156.2 L300.5 159.9 M297.8 159.6 L291.8 153.3 M305.1 144.5 L305.6 151.9 L306.2 152.3 L307.1 149.2 L305.2 148.5 M294.4 170.1 L296.7 168.7 L297.8 170.4 L295.4 171.5 L294.4 170.1 M253.4 66.3 L257.0 67.1 L260.6 67.7 M243.5 68.4 L246.6 68.4 L246.0 71.5 L245.5 75.1 M259.6 55.3 L262.0 57.0 L264.5 57.6 L267.7 58.3 L266.8 60.3 L264.5 62.3 L266.0 62.7 L267.0 65.7 M264.5 55.8 L264.5 54.3 L266.2 52.2 M260.8 54.9 L264.5 55.8 M266.8 60.3 L269.7 60.4 L270.9 61.3 L274.5 61.7 L275.5 61.9 L275.5 63.0 M269.7 60.4 L274.5 60.4 L275.6 58.6 L273.2 56.5 L277.0 55.5 L276.2 51.3 M266.0 62.7 L270.9 61.3 M277.0 55.5 L282.7 57.6 L288.0 58.2 L290.1 56.0 L289.6 53.2 L289.4 51.2 L288.3 50.6 L284.2 50.6 M275.6 58.6 L280.2 58.9 L282.7 57.6 M280.2 58.9 L280.0 60.2 L278.9 61.3 L275.5 61.9 M280.2 59.6 L282.6 60.0 L287.6 59.2 L288.0 58.2 M278.9 61.3 L282.9 62.7 L284.9 62.4 L288.6 59.7 M287.6 59.2 L293.8 59.3 L296.1 61.9 L296.1 63.3 L298.2 63.6 M284.9 62.4 L288.3 64.7 L287.9 67.8 L285.9 69.8 L284.4 71.5 M288.3 65.1 L294.4 65.3 L296.7 65.8 M287.9 67.8 L293.0 68.7 L295.8 68.3 M293.4 68.7 L293.0 70.1 M282.9 62.7 L283.0 64.1 L278.5 63.7 L278.5 62.3 M283.0 64.1 L283.6 66.4 L282.3 67.6 M283.6 66.4 L285.0 67.1 L285.3 68.4 L283.6 68.4 M289.4 51.2 L292.7 49.9 L293.8 48.8 L296.1 48.1 L295.4 46.2 L295.0 44.2 L295.8 43.4 M286.0 48.2 L291.6 47.8 L293.8 48.8 M290.6 45.8 L295.0 46.2 M288.3 50.6 L292.7 49.9 M289.6 53.2 L289.6 54.8 L299.4 55.0 L301.2 53.9 L299.9 48.9 L296.1 48.1 M290.1 56.0 L288.0 58.2 M301.2 53.9 L304.9 55.0 L306.6 56.3 L312.9 57.5 L312.5 59.9 L310.3 61.0 M296.5 28.7 L297.2 32.9 L298.7 37.4 L300.8 38.5 L295.5 42.0 M285.2 29.7 L289.7 31.4 L290.1 34.4 M285.2 29.7 L281.6 30.6 L278.8 32.7 L276.3 35.4 L273.1 37.7 L273.4 41.2 L271.9 44.2 M285.2 29.7 L292.6 29.6 L296.5 28.7 L299.8 28.7 M268.2 49.9 L270.1 50.1 M308.1 63.6 L312.5 59.9 M312.9 66.3 L317.9 67.3 L322.1 68.6 L325.0 68.6 M315.0 69.0 L317.9 69.5 L320.0 69.3 L322.1 68.6 M317.9 69.5 L319.7 71.5 L322.1 72.7 L325.4 73.4 M319.7 71.5 L318.6 72.0 L319.7 75.1 L316.3 75.2 L308.2 75.7 L307.5 77.1 M319.7 75.1 L321.4 77.2 L320.6 79.6 L323.8 83.9 L325.1 85.5 M316.3 75.2 L314.3 79.1 L311.2 80.5 L311.5 82.5 L308.6 83.2 L310.0 84.6 L307.3 86.5 L305.8 86.0 M306.6 80.6 L308.1 79.4 L307.2 78.8 M306.6 80.6 L306.5 83.2 L305.8 86.0 M304.8 83.5 L305.6 86.0 M311.5 82.5 L315.7 83.8 L319.6 86.5 L322.1 86.6 L323.8 85.3 M322.1 86.6 L323.6 87.5 L324.8 87.5 M329.4 93.0 L330.0 95.3 L334.5 95.7 L335.2 99.6 L330.0 101.0 L325.7 101.5 L321.8 103.5 L317.6 103.3 L316.9 104.7 M330.0 101.0 L331.5 104.4 M334.5 95.7 L335.2 93.6 L336.1 92.6 M322.8 62.6 L322.8 59.7 L322.1 59.2 L323.3 56.5 L328.2 54.5 L334.2 55.6 L342.8 55.8 L343.5 51.9 L349.9 50.2 L357.0 51.1 L365.1 50.6 L369.8 55.6 L374.0 55.5 L380.2 58.0 M380.2 58.0 L384.0 56.6 L389.7 56.0 L395.4 56.9 L395.8 54.0 L401.1 54.9 L407.9 56.5 L413.2 58.0 L418.1 56.5 L422.0 57.2 L423.7 57.6 L426.2 56.7 L427.8 52.2 L434.6 52.5 L437.3 57.2 L441.9 58.5 L448.0 59.2 L445.2 64.0 L442.7 64.3 L442.3 67.0 L441.7 67.6 M380.2 58.0 L385.4 63.7 L391.8 65.0 L393.1 67.3 L399.6 67.6 L405.3 68.8 L415.1 65.8 L415.3 63.9 L420.6 63.3 L421.3 62.2 L426.5 61.6 L422.0 57.2 M380.2 58.0 L377.6 61.0 L374.0 60.9 L373.0 63.3 L369.8 64.1 L370.1 68.0 L365.4 69.7 L360.8 71.8 L362.5 75.1 L366.9 77.5 L368.4 79.2 L367.9 83.5 L371.2 85.0 L370.2 87.0 L374.8 89.0 L381.3 90.5 L382.3 89.2 L386.8 89.7 L386.8 88.5 L394.0 87.8 L394.7 88.3 L396.4 88.7 L396.2 93.9 L397.2 96.6 L399.8 97.0 L401.2 96.1 L405.0 95.6 L407.6 96.0 L409.6 97.4 M370.2 87.0 L371.2 85.0 M371.2 85.0 L381.3 88.3 L382.3 89.2 M382.3 89.2 L382.6 90.6 L383.7 91.0 L386.8 89.7 M332.7 75.0 L335.6 73.8 L337.4 73.7 L342.0 75.9 L343.0 77.4 L342.3 79.2 L342.6 83.2 L343.9 83.9 L342.6 85.6 L346.0 89.3 L343.6 92.2 M342.6 85.6 L350.3 85.5 L354.6 82.6 L355.8 79.9 L357.3 76.7 L362.5 75.1 M343.0 77.4 L347.7 76.4 L350.6 74.8 L352.7 75.4 L357.7 74.1 L357.8 75.8 L362.5 75.1 M331.4 69.3 L334.9 69.3 L335.6 64.0 L339.2 63.1 L342.8 65.0 L349.9 69.7 L352.7 69.4 L355.8 68.0 L357.0 67.8 L360.5 66.8 L361.7 66.6 L370.1 68.0 M335.6 69.3 L337.1 69.3 L341.2 67.8 L344.2 71.1 L350.6 74.8 M349.9 69.7 L352.7 75.4 M352.7 69.4 L356.3 70.8 L360.8 71.8 L356.7 72.0 L352.0 72.1 M355.8 68.0 L358.0 69.0 L360.1 70.0 L360.8 71.8 M352.7 94.3 L357.0 93.3 L354.8 89.6 L361.2 84.5 L363.1 82.1 L362.0 78.6 L366.9 77.5 M381.3 90.5 L382.4 92.2 L382.6 96.9 M383.7 91.0 L387.6 92.4 L385.7 94.4 L387.3 95.3 L387.3 98.1 M387.3 95.3 L388.7 93.9 L390.5 92.0 L394.0 89.5 L394.7 88.3 M396.2 93.9 L394.8 93.7 L396.7 95.0 L397.2 96.6 M399.8 97.0 L398.4 99.1 L399.9 100.3 L399.6 103.0 L401.2 102.1 L404.9 103.1 L406.2 105.8 L405.5 107.7 L401.8 107.8 L402.3 111.4 M398.4 99.1 L395.4 100.0 L396.7 104.7 L395.7 106.4 L396.9 109.2 L397.7 111.4 L396.4 113.5 M401.2 96.1 L404.9 99.3 L403.8 100.6 L405.6 101.5 L409.0 107.4 L408.9 110.5 L406.5 111.5 L407.0 112.6 L404.5 113.2 M409.0 107.4 L405.5 107.7 M398.4 118.9 L399.8 120.0 L401.2 119.2 M411.9 125.2 L413.2 126.7 L415.6 126.0 L419.0 126.0 L420.3 123.7 L420.4 122.0 L423.3 122.0 M456.5 131.7 L456.5 141.1 M432.9 71.0 L436.5 68.6 L438.3 69.1 L440.5 67.7 L441.7 67.6 M436.2 74.2 L438.6 73.1 M438.6 73.1 L436.2 74.2 M298.7 42.5 L295.8 43.2 M322.8 62.6 L325.7 61.7 L329.2 61.2 L331.4 61.4 L331.7 63.6 L328.8 64.0 L327.5 64.7 L329.2 66.8 L331.1 68.3 L330.7 69.7 L332.5 70.0 L331.4 71.8 L332.5 75.1 L330.0 75.7 L327.5 75.0 L325.7 73.5 L326.1 70.8 L325.0 68.6 L323.6 66.8 L322.8 64.7 L322.8 62.6" fill="none" stroke="#d1bdb7" stroke-width="1" stroke-linejoin="round"/></g><defs><filter id="mb" x="0" y="0" width="100%" height="100%"><feGaussianBlur stdDeviation="0.35"/></filter></defs></svg>
<!-- firebug -->
<div class="a" id="fbtool"></div>
<svg class="a" style="left:13px;top:453px" width="21" height="19" viewBox="0 0 20 18"><g transform="rotate(-24 10 9)"><path d="M4 4L7 7M3 14L6.5 11M9 3.5L10 6M15 3.5L14 6.5M16 14.5L14.5 11.5M9.5 14.8L10 12" stroke="#8a8680" stroke-width="0.9" fill="none"/><ellipse cx="10.5" cy="9" rx="7.2" ry="4.5" fill="#e6a035"/><ellipse cx="11.5" cy="7.8" rx="4.8" ry="2.2" fill="#f7d68c"/><path d="M9 5.2L12 12.6" stroke="#b5651d" stroke-width="1.2"/><ellipse cx="4" cy="9.3" rx="2.1" ry="2.8" fill="#55260e"/></g></svg>
<svg class="a" style="left:40px;top:456px" width="19" height="17" viewBox="0 0 19 17"><path d="M1.5 1.5H17.5V7.5H1.5Z" fill="#f4f7fc" stroke="#4f74bf" stroke-width="1.6"/><path d="M8 3V13.5L10.4 11.3L12.3 15.8L14.3 14.9L12.4 10.6L15.6 10.4Z" fill="#5e93e4" stroke="#4a78c8" stroke-width="0.6"/></svg>
<div class="a" style="left:63px;top:453px;width:1px;height:24px;background:#aaa69e"></div>
<svg class="a" style="left:71px;top:458px" width="13" height="16"><path d="M10.5 1.5L2.5 8L10.5 14.5" fill="none" stroke="#8e8b85" stroke-width="2.6"/><path d="M10.5 1.5L2.5 8L10.5 14.5" fill="none" stroke="#f4f3f0" stroke-width="1.3"/></svg>
<svg class="a" style="left:96px;top:458px" width="13" height="16"><path d="M2.5 1.5L10.5 8L2.5 14.5" fill="none" stroke="#8e8b85" stroke-width="2.6"/><path d="M2.5 1.5L10.5 8L2.5 14.5" fill="none" stroke="#f4f3f0" stroke-width="1.3"/></svg>
<div class="a" style="left:117px;top:453px;width:1px;height:24px;background:#aaa69e"></div>
<svg class="a" style="left:123px;top:460px" width="15" height="12"><path d="M0 1.5H15M0 4.5H15M0 7.5H15M0 10.5H15" stroke="#bcb9b2" stroke-width="1"/></svg>
<div class="a" style="left:148px;top:450px;width:19px;height:30px;border:1px solid #e6e4df;border-bottom:none;border-radius:3px 3px 0 0;background:linear-gradient(#cfccc5,#b3b0a9)"><svg class="a" style="left:6px;top:13px" width="5" height="3"><path d="M0 0H5L2.5 3Z" fill="#222"/></svg></div>
<div class="a" style="left:167px;top:459px;width:76px;height:22px;border:1px solid #a5a29a;border-bottom:none;border-radius:5px 5px 0 0;background:linear-gradient(#f6f5f2,#e2dfd8)"></div>
<span class="fbtab" style="letter-spacing:0.00px;--k:-2.09px;left:173px;top:463px;color:#000;font-size:11px"><span class="k">コンソール</span></span>
<svg class="a" style="left:226px;top:467px" width="9" height="5"><path d="M0 0H9L4.5 5Z" fill="#222"/></svg>
<span class="fbtab" style="letter-spacing:0.80px;left:250px">HTML</span>
<span class="fbtab" style="letter-spacing:1.15px;left:297px">CSS</span>
<span class="fbtab" style="letter-spacing:0.00px;--k:-1.40px;left:337px"><span class="k">スクリプト</span></span>
<span class="fbtab" style="letter-spacing:1.22px;left:397px">DOM</span>
<span class="fbtab" style="letter-spacing:0.00px;--k:-2.17px;left:439px"><span class="k">ネット</span></span>
<span class="fbtab" style="letter-spacing:0.78px;left:481px;color:#9b9993">Cookie</span>
<div class="a" style="left:605px;top:453px;width:146px;height:23px;background:#fff;border:1px solid #b3b0a9;border-radius:5px"></div>
<svg class="a" style="left:610px;top:456px" width="14" height="14" viewBox="0 0 17 17"><circle cx="10.5" cy="6.5" r="4.2" fill="#fff" stroke="#3b6ea5" stroke-width="2.2"/><path d="M7.3 9.7L2 15" stroke="#3b6ea5" stroke-width="2.8" stroke-linecap="round"/></svg>
<div class="a rb" style="left:758px"><div class="a" style="left:3px;top:6px;width:7px;height:2px;background:#fff"></div></div>
<div class="a rb" style="left:774px"><div class="a" style="left:2px;top:4px;width:6px;height:6px;border:1px solid #fff"></div><div class="a" style="left:4px;top:2px;width:6px;height:6px;border:1px solid #fff;border-left:none;border-bottom:none"></div></div>
<div class="a rb" style="left:790px"><svg class="a" style="left:1px;top:1px" width="10" height="10"><path d="M3 2.5A3.6 3.6 0 1 0 7 2.5" fill="none" stroke="#fff" stroke-width="1.2"/><path d="M5 0.5V5" stroke="#fff" stroke-width="1.2"/></svg></div>
<!-- left console -->
<div class="a" style="left:4px;top:481px;width:361px;height:227px;background:#fff"></div>
<div class="a" id="ctool"></div>
<svg class="a" style="left:13px;top:487px" width="18" height="18" viewBox="0 0 18 18"><rect x="2.2" y="2" width="5" height="10.5" fill="#e9a93c" stroke="#c98a28" stroke-width="0.6"/><rect x="9" y="2" width="4.4" height="10.5" fill="#e9a93c" stroke="#c98a28" stroke-width="0.6"/><circle cx="11.7" cy="11.7" r="3.8" fill="#fbeaea" stroke="#d9342c" stroke-width="1.8"/><path d="M9.2 14.2L14.2 9.2" stroke="#d9342c" stroke-width="1.6"/></svg>
<div class="a" style="left:36px;top:486px;width:1px;height:17px;background:#8f8c85"></div>
<span class="t" style="letter-spacing:0.00px;--k:-4.35px;left:50px;top:488px;font-size:13px"><span class="k">クリア</span></span>
<div class="a" style="left:86px;top:484px;width:46px;height:21px;background:#e9e7e2;border:1px solid;border-color:#8f8c85 #fff #fff #8f8c85"></div>
<span class="t" style="letter-spacing:0.00px;--c:1.00px;left:97px;top:488px;font-size:13px"><span class="c">持続</span></span>
<span class="t" style="letter-spacing:0.00px;--k:-3.21px;left:139px;top:488px;font-size:13px"><span class="k">プロファイル</span></span>
<div class="a" style="left:208px;top:486px;width:1px;height:17px;background:#8f8c85"></div>
<div class="a" style="left:212px;top:484px;width:51px;height:21px;background:#e9e7e2;border:1px solid;border-color:#8f8c85 #fff #fff #8f8c85"></div>
<span class="t" style="letter-spacing:0.00px;--k:-3.04px;left:224px;top:488px;font-size:13px"><span class="k">すべて</span></span>
<span class="t" style="letter-spacing:0.00px;--k:-3.91px;left:274px;top:488px;font-size:13px"><span class="k">エラー</span></span>
<span class="t" style="letter-spacing:0.00px;--c:0.00px;left:324px;top:488px;font-size:13px"><span class="c">警告</span></span>
<div class="a row" style="top:508px;height:18px"></div>
<div class="a row" style="top:526px;height:47px"></div>
<div class="a row" style="top:573px;height:32px"></div>
<div class="a row" style="top:605px;height:18px"></div>
<span class="cl" style="letter-spacing:0.04px;top:511px;color:#0000c0">&gt;&gt;&gt; geom_1.getCentroid();</span>
<span class="cl" style="letter-spacing:0.37px;top:528px;color:#006400;font-weight:bold">POINT(-87 -17) {</span>
<span class="cl" style="letter-spacing:0.74px;top:543px;color:#006400;font-weight:bold">id=<span style="color:#c80000">"OpenLayers.Geometry.Point_79"</span>,&nbsp; x=<span style="color:#000080">-87</span>,&nbsp; y=<span style="color:#000080">-17</span>,</span>
<span class="cl" style="letter-spacing:-0.35px;--k:-1.57px;--c:0.00px;top:555.5px;color:#222;font-weight:bold;font-size:12px;font-family:'Liberation Sans','IPAGothic',sans-serif"><span class="k">もっと</span><span class="c">見</span><span class="k">る</span>... <span style="color:#006400">}</span></span>
<span class="cl" style="letter-spacing:0.02px;top:575px;color:#0000c0">&gt;&gt;&gt; geom_1.getCentroid();&nbsp; geom_1.atPoint(new</span>
<span class="cl" style="letter-spacing:-0.00px;top:590px;color:#0000c0">OpenLayers.LonLat(-87,-17));</span>
<span class="cl" style="letter-spacing:-0.00px;top:608px;color:#222">true</span>
<!-- splitter -->
<div class="a" style="left:365px;top:481px;width:6px;height:227px;background:#dcd9d2;border-left:1px solid #8f8c85;border-right:1px solid #8f8c85"></div>
<!-- right editor -->
<div class="a" style="left:371px;top:481px;width:438px;height:205px;background:#fff"></div>
<div class="a" style="left:375px;top:500px;width:432px;height:18px;background:#e1eefb"></div>
<span class="ed16" style="letter-spacing:-0.04px;top:483.5px">geom_1.getCentroid();</span>
<span class="ed16" style="letter-spacing:-0.04px;top:501.5px">geom_1.atPoint(<span style="color:#1a2fbf">new</span> OpenLayers.LonLat(-87,-17));</span>
<div class="a" style="left:751px;top:501px;width:1px;height:16px;background:#000"></div>
<div class="a" style="left:371px;top:686px;width:438px;height:22px;background:#d4d0c8;border-top:1px solid #8f8c85"></div>
<span class="t" style="letter-spacing:0.00px;--c:0.00px;left:383px;top:690px;font-size:13px"><span class="c">実行</span></span>
<span class="t" style="letter-spacing:0.00px;--k:-4.78px;left:427px;top:690px;font-size:13px"><span class="k">クリア</span></span>
<span class="t" style="letter-spacing:0.00px;--k:-3.48px;left:473px;top:690px;font-size:13px"><span class="k">コピー</span></span>
<span class="t" style="letter-spacing:0.00px;--c:0.00px;left:520px;top:690px;font-size:13px"><span class="c">履歴</span></span>
<div class="a rb" style="left:794px;top:690px"><svg class="a" style="left:2px;top:4px" width="8" height="5"><path d="M0.5 0.5H7.5L4 4.5Z" fill="none" stroke="#fff" stroke-width="1"/></svg></div>
<!-- addon bar -->
<div class="a" style="left:4px;top:708px;width:805px;height:1px;background:#8f8c85"></div>
<div class="a" style="left:4px;top:709px;width:805px;height:1px;background:#f4f3f0"></div>
<svg class="a" style="left:13px;top:715px" width="8" height="8"><path d="M1 1L7 7M7 1L1 7" stroke="#333" stroke-width="1.8"/></svg>
</body></html>
